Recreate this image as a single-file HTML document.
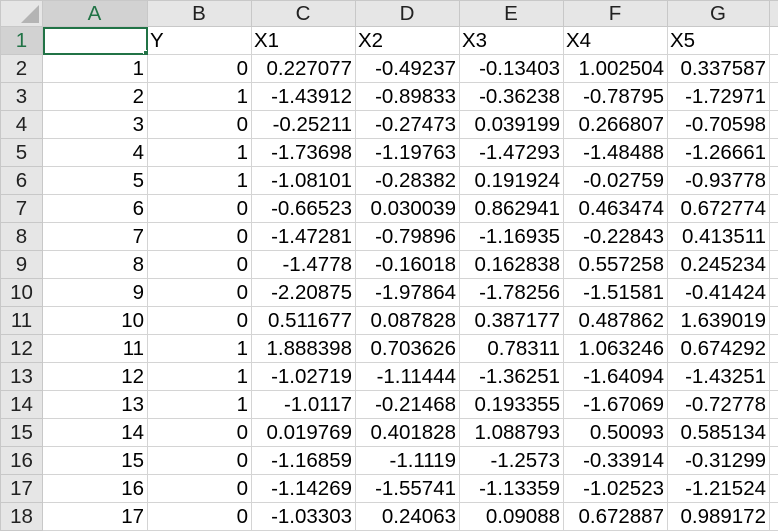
<!DOCTYPE html><html><head><style>
body{margin:0;width:778px;height:518px;overflow:hidden;background:#fff;font-family:"Liberation Sans",Arial,sans-serif;}
table{border-collapse:collapse;table-layout:fixed;position:absolute;left:0;top:0;width:789px}
td{border:1px solid #d4d4d4;height:27px;padding:0 3px 0 2px;font-size:20.5px;text-align:right;white-space:nowrap;overflow:hidden;color:#000;line-height:27px;box-sizing:border-box}
tr.h td{background:#e6e6e6;text-align:center;height:25px;line-height:25px;border-color:#c8c8c8;color:#222}
td.r{background:#e6e6e6;text-align:center;border-color:#c8c8c8;color:#222;padding:0}
td.l{text-align:left}
tr.h td.sel,td.r.sel{background:#d2d2d2;color:#217346}
tr{height:28px}
tr.h{height:25px}
</style></head><body>
<table>
<colgroup><col style="width:42px"><col style="width:105px"><col style="width:104px"><col style="width:104px"><col style="width:104px"><col style="width:104px"><col style="width:104px"><col style="width:102px"><col style="width:20px"></colgroup>
<tr class="h"><td style="position:relative;padding:0"><svg style="position:absolute;right:3px;bottom:3px" width="18" height="18"><polygon points="18,0 18,18 0,18" fill="#b4b4b4"/></svg></td><td class="sel">A</td><td>B</td><td>C</td><td>D</td><td>E</td><td>F</td><td>G</td><td></td></tr>
<tr><td class="r sel">1</td><td style="position:relative;outline:2px solid #217346;outline-offset:-2px"><div style="position:absolute;right:-4px;bottom:-4px;width:6px;height:6px;background:#217346;border:1px solid #fff"></div></td><td class="l">Y</td><td class="l">X1</td><td class="l">X2</td><td class="l">X3</td><td class="l">X4</td><td class="l">X5</td><td></td></tr>
<tr><td class="r">2</td><td>1</td><td>0</td><td>0.227077</td><td>-0.49237</td><td>-0.13403</td><td>1.002504</td><td>0.337587</td><td></td></tr>
<tr><td class="r">3</td><td>2</td><td>1</td><td>-1.43912</td><td>-0.89833</td><td>-0.36238</td><td>-0.78795</td><td>-1.72971</td><td></td></tr>
<tr><td class="r">4</td><td>3</td><td>0</td><td>-0.25211</td><td>-0.27473</td><td>0.039199</td><td>0.266807</td><td>-0.70598</td><td></td></tr>
<tr><td class="r">5</td><td>4</td><td>1</td><td>-1.73698</td><td>-1.19763</td><td>-1.47293</td><td>-1.48488</td><td>-1.26661</td><td></td></tr>
<tr><td class="r">6</td><td>5</td><td>1</td><td>-1.08101</td><td>-0.28382</td><td>0.191924</td><td>-0.02759</td><td>-0.93778</td><td></td></tr>
<tr><td class="r">7</td><td>6</td><td>0</td><td>-0.66523</td><td>0.030039</td><td>0.862941</td><td>0.463474</td><td>0.672774</td><td></td></tr>
<tr><td class="r">8</td><td>7</td><td>0</td><td>-1.47281</td><td>-0.79896</td><td>-1.16935</td><td>-0.22843</td><td>0.413511</td><td></td></tr>
<tr><td class="r">9</td><td>8</td><td>0</td><td>-1.4778</td><td>-0.16018</td><td>0.162838</td><td>0.557258</td><td>0.245234</td><td></td></tr>
<tr><td class="r">10</td><td>9</td><td>0</td><td>-2.20875</td><td>-1.97864</td><td>-1.78256</td><td>-1.51581</td><td>-0.41424</td><td></td></tr>
<tr><td class="r">11</td><td>10</td><td>0</td><td>0.511677</td><td>0.087828</td><td>0.387177</td><td>0.487862</td><td>1.639019</td><td></td></tr>
<tr><td class="r">12</td><td>11</td><td>1</td><td>1.888398</td><td>0.703626</td><td>0.78311</td><td>1.063246</td><td>0.674292</td><td></td></tr>
<tr><td class="r">13</td><td>12</td><td>1</td><td>-1.02719</td><td>-1.11444</td><td>-1.36251</td><td>-1.64094</td><td>-1.43251</td><td></td></tr>
<tr><td class="r">14</td><td>13</td><td>1</td><td>-1.0117</td><td>-0.21468</td><td>0.193355</td><td>-1.67069</td><td>-0.72778</td><td></td></tr>
<tr><td class="r">15</td><td>14</td><td>0</td><td>0.019769</td><td>0.401828</td><td>1.088793</td><td>0.50093</td><td>0.585134</td><td></td></tr>
<tr><td class="r">16</td><td>15</td><td>0</td><td>-1.16859</td><td>-1.1119</td><td>-1.2573</td><td>-0.33914</td><td>-0.31299</td><td></td></tr>
<tr><td class="r">17</td><td>16</td><td>0</td><td>-1.14269</td><td>-1.55741</td><td>-1.13359</td><td>-1.02523</td><td>-1.21524</td><td></td></tr>
<tr><td class="r">18</td><td>17</td><td>0</td><td>-1.03303</td><td>0.24063</td><td>0.09088</td><td>0.672887</td><td>0.989172</td><td></td></tr>
</table>
</body></html>
